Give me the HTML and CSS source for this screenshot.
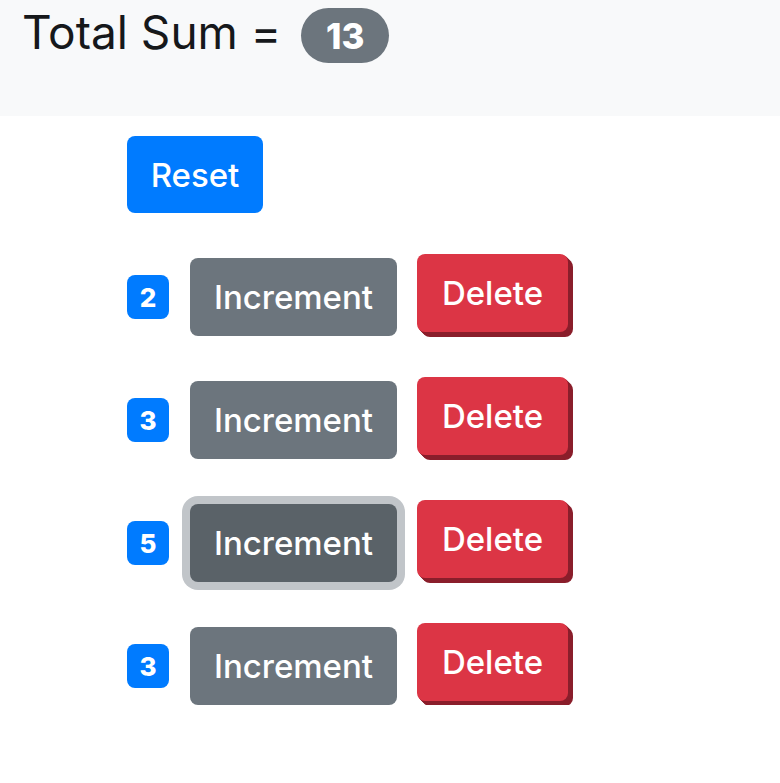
FILE: index.html
```html
<!DOCTYPE html>
<html>
<head>
<meta charset="utf-8">
<link rel="stylesheet" href="styles.css">
</head>
<body>
<nav class="navbar">
  <span class="brand">Total Sum =</span>
  <span class="pill">13</span>
</nav>
<main class="content">
  <button class="btn btn-reset">Reset</button>
  <div class="row">
    <span class="count">2</span>
    <button class="btn btn-inc">Increment</button>
    <button class="btn btn-del">Delete</button>
  </div>
  <div class="row">
    <span class="count">3</span>
    <button class="btn btn-inc">Increment</button>
    <button class="btn btn-del">Delete</button>
  </div>
  <div class="row">
    <span class="count">5</span>
    <button class="btn btn-inc focused">Increment</button>
    <button class="btn btn-del">Delete</button>
  </div>
  <div class="row">
    <span class="count">3</span>
    <button class="btn btn-inc">Increment</button>
    <button class="btn btn-del">Delete</button>
  </div>
</main>
</body>
</html>
```

FILE: styles.css
```css
html, body {
  margin: 0;
  padding: 0;
  background: #fff;
  font-family: Inter, "Noto Sans", sans-serif;
  color: #212529;
}

.navbar {
  height: 116px;
  box-sizing: border-box;
  background: #f8f9fa;
  display: flex;
  align-items: flex-start;
  padding: 4px 0 0 22px;
}

.brand {
  font-size: 46px;
  line-height: 56px;
  margin-right: 20px;
  color: #16181b;
}

.pill {
  display: inline-flex;
  align-items: center;
  justify-content: center;
  width: 88px;
  height: 55px;
  margin-top: 4px;
  border-radius: 28px;
  background: #6c757d;
  color: #fff;
  font-weight: 800;
  font-size: 35px;
}

.content {
  padding: 20px 0 0 127px;
}

.btn {
  font-family: inherit;
  font-size: 33px;
  font-weight: 500;
  border: none;
  color: #fff;
  border-radius: 8px;
  height: 77px;
  padding: 0;
  cursor: pointer;
  display: inline-flex;
  align-items: center;
  justify-content: center;
}

.btn-reset {
  width: 136px;
  background: #007bff;
  display: flex;
}

.row {
  display: flex;
  align-items: center;
  margin-top: 45px;
  height: 78px;
}

.count {
  display: inline-flex;
  align-items: center;
  justify-content: center;
  width: 42px;
  height: 44px;
  border-radius: 8px;
  background: #007bff;
  color: #fff;
  font-weight: 800;
  font-size: 26px;
  margin-right: 21px;
}

.btn-inc {
  width: 207px;
  height: 78px;
  background: #6c757d;
  margin-right: 20px;
}

.btn-inc.focused {
  background: #5a6268;
  box-shadow: 0 0 0 8px #c1c5c9;
}

.btn-del {
  width: 151px;
  height: 78px;
  background: #dc3545;
  transform: translateY(-4px);
  box-shadow: 1px 1px 0 #8a1e2b, 2px 2px 0 #8a1e2b, 3px 3px 0 #8a1e2b, 4px 4px 0 #8a1e2b, 5px 5px 0 #8a1e2b;
}
```
